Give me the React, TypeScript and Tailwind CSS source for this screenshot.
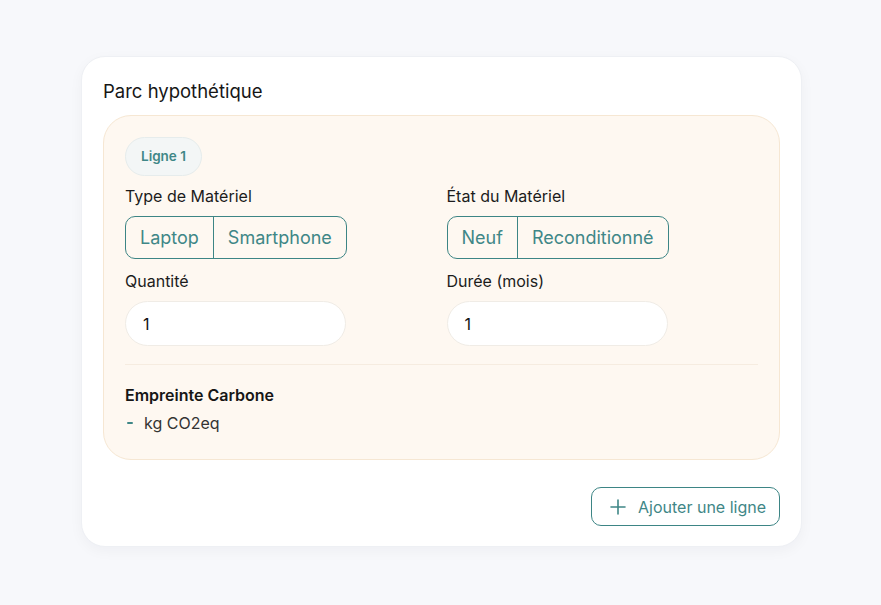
import React from "react";

const font = { fontFamily: "Inter, 'Noto Sans', sans-serif" };

function Segmented({ options }: { options: string[] }) {
  return (
    <div className="flex h-[43px] w-fit overflow-hidden rounded-[10px] border border-[#3d8585]">
      {options.map((o, i) => (
        <button
          key={o}
          className={`px-[14px] text-[18px] text-[#3f8787] ${i > 0 ? "border-l border-[#3d8585]" : ""}`}
        >
          {o}
        </button>
      ))}
    </div>
  );
}

function Field({ label, children }: { label: string; children: React.ReactNode }) {
  return (
    <div className="flex flex-col gap-[11px]">
      <div className="text-[16px] leading-[18px] text-[#1c1c1c]">{label}</div>
      {children}
    </div>
  );
}

function NumberInput() {
  return (
    <div className="flex h-[45px] w-[221px] items-center rounded-full border border-[#f0ece6] bg-white px-[17px] text-[16px] text-[#111]">
      1
    </div>
  );
}

export default function App() {
  return (
    <div className="min-h-[605px] bg-[#f7f8fb] pl-[81px] pr-[79px] pt-[56px]" style={font}>
      <div className="flex flex-col rounded-[24px] border border-[#eef0f4] bg-white px-[21px] pb-[20px] pt-[22px] shadow-[0_4px_14px_rgba(20,30,60,0.04)]">
        <h2 className="text-[18.5px] leading-[24px] text-[#161616]">Parc hypothétique</h2>
        <div className="mt-[12px] rounded-[28px] border border-[#f6e7d3] bg-[#fef8f1] px-[21px] pb-[26px] pt-[21px]">
          <div className="flex h-[39px] w-fit items-center rounded-full border border-[#e6ecec] bg-[#f3f6f6] px-[15px] text-[13.5px] font-semibold text-[#3f8787]">
            Ligne 1
          </div>
          <div className="mt-[11px] grid grid-cols-2 gap-x-[10px] gap-y-[13px]">
            <Field label="Type de Matériel">
              <Segmented options={["Laptop", "Smartphone"]} />
            </Field>
            <Field label="État du Matériel">
              <Segmented options={["Neuf", "Reconditionné"]} />
            </Field>
            <Field label="Quantité">
              <NumberInput />
            </Field>
            <Field label="Durée (mois)">
              <NumberInput />
            </Field>
          </div>
          <div className="mt-[18px] h-px bg-[#f6ece0]" />
          <div className="mt-[20px] text-[16px] font-semibold leading-[20px] text-[#161616]">
            Empreinte Carbone
          </div>
          <div className="mt-[8px] flex items-center gap-[11px] pl-[2px] text-[16px] leading-[20px] text-[#333]">
            <span className="h-[2px] w-[6px] rounded-full bg-[#3f8787]" />
            <span>kg CO2eq</span>
          </div>
        </div>
        <div className="mt-[27px] flex justify-end">
          <button className="flex h-[39px] items-center gap-[11px] rounded-[10px] border border-[#3d8585] pl-[17px] pr-[13px] text-[16px] text-[#3f8787]">
            <svg width="18" height="18" viewBox="0 0 18 18" fill="none" stroke="currentColor" strokeWidth="1.6" strokeLinecap="round">
              <path d="M9 2v14M2 9h14" />
            </svg>
            Ajouter une ligne
          </button>
        </div>
      </div>
    </div>
  );
}
